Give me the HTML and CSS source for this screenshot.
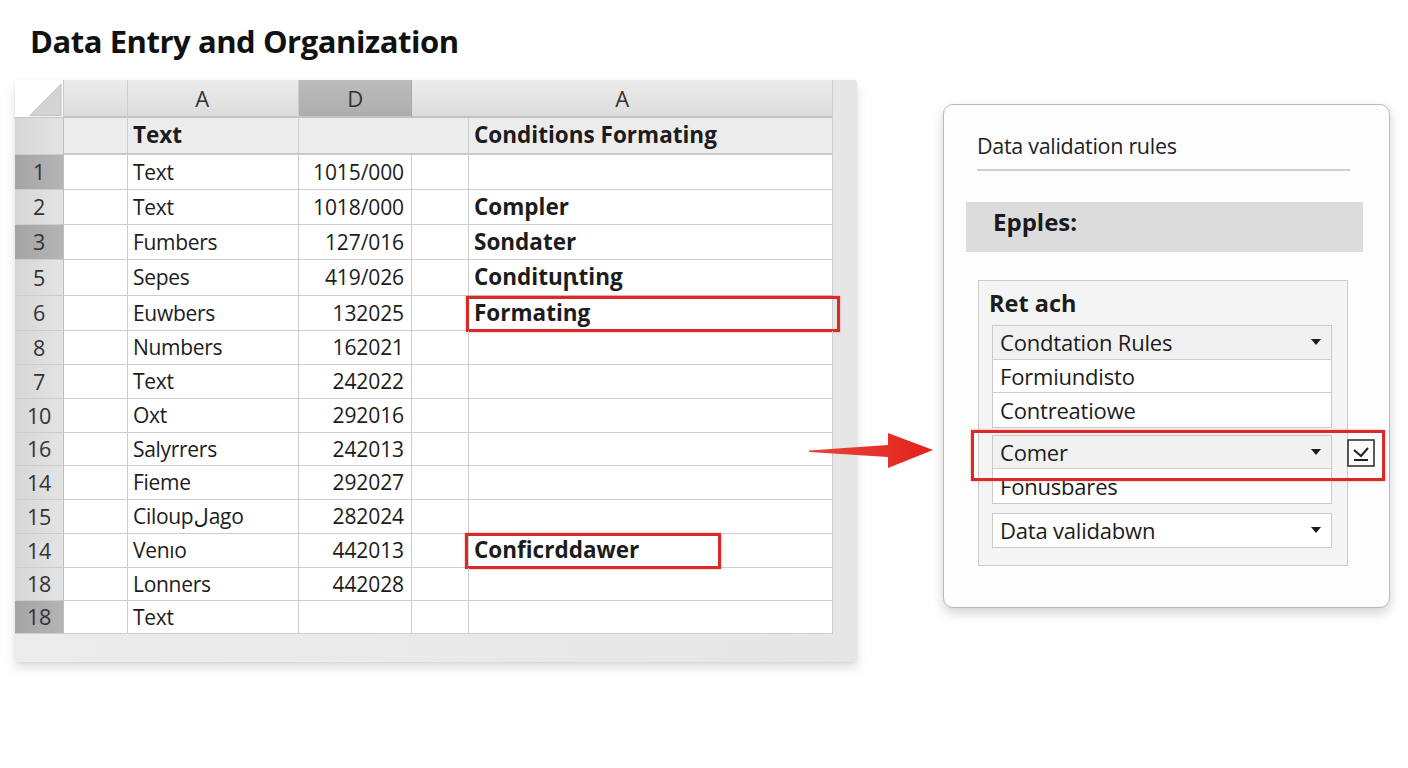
FILE: index.html
```html
<!DOCTYPE html>
<html lang="en">
<head>
<meta charset="utf-8">
<title>Data Entry and Organization</title>
<link rel="stylesheet" href="styles.css">
</head>
<body>
<main class="page">
  <h1 class="title">Data Entry and Organization</h1>
  <div class="stage">
    <section class="sheet">
      <div class="grid">
        <div class="c corner"><svg class="corner-tri" viewBox="0 0 49 38" width="49" height="38"><polygon points="15,36 47,4 47,36" fill="#d4d4d4" stroke="#bdbdbd" stroke-width="1"/></svg></div>
        <div class="c hdr"></div>
        <div class="c hdr center hdr-a">A</div>
        <div class="c hdr hdr-sel center">D</div>
        <div class="c hdr center span2">A</div>

        <div class="c rn"></div>
        <div class="c sub"></div>
        <div class="c sub b">Text</div>
        <div class="c sub span2"></div>
        <div class="c sub b">Conditions Formating</div>

        <div class="c rn dark">1</div><div class="c"></div><div class="c">Text</div><div class="c num">1015/000</div><div class="c"></div><div class="c b"></div>
        <div class="c rn">2</div><div class="c"></div><div class="c">Text</div><div class="c num">1018/000</div><div class="c"></div><div class="c b">Compler</div>
        <div class="c rn dark">3</div><div class="c"></div><div class="c">Fumbers</div><div class="c num">127/016</div><div class="c"></div><div class="c b">Sondater</div>
        <div class="c rn">5</div><div class="c"></div><div class="c">Sepes</div><div class="c num">419/026</div><div class="c"></div><div class="c b">Condituꞃting</div>
        <div class="c rn">6</div><div class="c"></div><div class="c">Euwbers</div><div class="c num">132025</div><div class="c"></div><div class="c b">Formating<span class="mark mark-wide"></span></div>
        <div class="c rn">8</div><div class="c"></div><div class="c">Numbers</div><div class="c num">162021</div><div class="c"></div><div class="c b"></div>
        <div class="c rn">7</div><div class="c"></div><div class="c">Text</div><div class="c num">242022</div><div class="c"></div><div class="c b"></div>
        <div class="c rn">10</div><div class="c"></div><div class="c">Oxt</div><div class="c num">292016</div><div class="c"></div><div class="c b"></div>
        <div class="c rn">16</div><div class="c"></div><div class="c">Salyrrers</div><div class="c num">242013</div><div class="c"></div><div class="c b"></div>
        <div class="c rn">14</div><div class="c"></div><div class="c">Fieme</div><div class="c num">292027</div><div class="c"></div><div class="c b"></div>
        <div class="c rn">15</div><div class="c"></div><div class="c">Ciloupلago</div><div class="c num">282024</div><div class="c"></div><div class="c b"></div>
        <div class="c rn">14</div><div class="c"></div><div class="c">Venıo</div><div class="c num">442013</div><div class="c"></div><div class="c b">Conficrddawer<span class="mark mark-short"></span></div>
        <div class="c rn">18</div><div class="c"></div><div class="c">Lonners</div><div class="c num">442028</div><div class="c"></div><div class="c b"></div>
        <div class="c rn dark">18</div><div class="c"></div><div class="c">Text</div><div class="c num"></div><div class="c"></div><div class="c b"></div>
      </div>
    </section>

    <aside class="panel">
      <h2 class="panel-title">Data validation rules</h2>
      <div class="band">Epples:</div>
      <div class="inner">
        <div class="inner-title">Ret ach</div>
        <div class="list">
          <div class="item shade">Condtation Rules<span class="caret"></span></div>
          <div class="item">Formiundisto</div>
          <div class="item">Contreatiowe</div>
        </div>
        <div class="list">
          <div class="item shade">Comer<span class="caret"></span></div>
          <div class="item">Fonusbares</div>
        </div>
        <div class="list list-last">
          <div class="item">Data validabwn<span class="caret"></span></div>
        </div>
      </div>
      <div class="sel-box"></div>
      <svg class="check" viewBox="0 0 28 28" width="28" height="28">
        <rect x="1" y="1" width="26" height="26" fill="#fafafa" stroke="#333" stroke-width="1.6"/>
        <path d="M7 11 L14 17 L21 9" fill="none" stroke="#222" stroke-width="2"/>
        <path d="M7 21 H21" stroke="#222" stroke-width="2"/>
      </svg>
    </aside>
  </div>
  <svg class="arrow" viewBox="805 428 132 44" width="132" height="44">
    <defs>
      <linearGradient id="ag" x1="0" y1="0" x2="1" y2="0">
        <stop offset="0" stop-color="#e8453c"/>
        <stop offset="1" stop-color="#e3221b"/>
      </linearGradient>
    </defs>
    <polygon points="809,450.5 888,445 888,433 933,450 888,468 888,457 809,452" fill="url(#ag)"/>
  </svg>
</main>
</body>
</html>
```

FILE: styles.css
```css
* { box-sizing: border-box; }
html, body { margin: 0; padding: 0; background: #ffffff; }
body {
  font-family: "Open Sans", "Noto Sans", "DejaVu Sans", sans-serif;
  color: #1c1c1c;
  width: 1408px;
  height: 768px;
  overflow: hidden;
}
.page { position: relative; padding-left: 15px; }
.title {
  margin: 0;
  height: 80px;
  padding: 19px 0 0 15px;
  font-size: 31px;
  line-height: 44px;
  font-weight: 700;
  letter-spacing: -0.45px;
  color: #111;
}
.stage { display: flex; align-items: flex-start; gap: 86px; }

/* spreadsheet */
.sheet {
  background: linear-gradient(90deg, #ececec, #e6e6e6);
  padding: 0 24px 28px 0;
  box-shadow: 0 6px 12px rgba(0,0,0,0.12), 0 1px 3px rgba(0,0,0,0.08);
  border-radius: 0 3px 4px 4px;
}
.grid {
  display: grid;
  grid-template-columns: 49px 64px 171px 113px 57px 364px;
  grid-template-rows: 38px 37px 35px 35px 35px 36px 35px 34px 34px 34px 33px 34px 34px 34px 33px 33px;
  background: #fff;
}
.c {
  position: relative;
  border-right: 1px solid #cdcdcd;
  border-bottom: 1px solid #cdcdcd;
  font-size: 21px;
  line-height: 1;
  display: flex;
  align-items: center;
  padding-left: 5px;
  white-space: nowrap;
  letter-spacing: -0.3px;
}
.center { justify-content: center; padding-left: 0; }
.hdr-a { padding-right: 22px; }
.span2 { grid-column: span 2; }
.b { font-weight: 700; font-size: 22.5px; letter-spacing: 0; }
.num { justify-content: flex-end; padding-right: 7px; padding-left: 0; letter-spacing: -0.1px; }
.corner { background: #fff; padding: 0; border-right: 1px solid #c6c6c6; border-bottom: 1px solid #c6c6c6; }
.corner-tri { display: block; }
.hdr {
  background: linear-gradient(180deg, #ececec, #dcdcdc);
  color: #333;
  font-size: 22px;
  border-bottom: 2px solid #c4c4c4;
}
.hdr-sel { background: linear-gradient(180deg, #bcbcbc, #adadad); border-right: 1px solid #a8a8a8; }
.sub { background: #ececec; border-bottom: 2px solid #cacaca; }
.rn {
  background: linear-gradient(90deg, #d6d6d6, #e4e4e4);
  justify-content: center;
  padding-left: 0;
  color: #333;
  font-size: 21.5px;
  border-right: 1px solid #bdbdbd;
}
.rn.dark { background: linear-gradient(90deg, #a5a5a5, #b4b4b4); }
.mark {
  position: absolute;
  border: 3px solid #d92a27;
  box-shadow: 0 0 2px rgba(217,42,39,0.5);
  pointer-events: none;
}
.mark-wide { left: -3px; top: 0; width: 374px; height: 36px; }
.mark-short { left: -4px; top: -1px; width: 256px; height: 36px; }

/* panel */
.panel {
  position: relative;
  margin-top: 24px;
  width: 447px;
  height: 504px;
  background: #fdfdfd;
  border: 1.5px solid #b9b9b9;
  border-radius: 10px;
  box-shadow: 0 5px 12px rgba(0,0,0,0.18);
  padding: 0 26px 0 22px;
}
.panel-title {
  margin: 0 0 0 11px;
  width: 373px;
  padding-top: 26px;
  height: 66px;
  font-size: 21.5px;
  line-height: 30px;
  font-weight: 400;
  color: #1f1f1f;
  border-bottom: 2px solid #cfcfcf;
  letter-spacing: -0.3px;
}
.band {
  margin-top: 31px;
  height: 50px;
  width: 397px;
  background: #dcdcdc;
  padding-left: 27px;
  font-size: 24px;
  font-weight: 700;
  line-height: 40px;
  color: #1a1a1a;
  letter-spacing: 0;
}
.inner {
  margin: 28px 0 0 12px;
  width: 370px;
  height: 286px;
  border: 1px solid #cbcbcb;
  background: #f4f4f4;
  padding: 7px 15px 0 13px;
  display: flex;
  flex-direction: column;
}
.inner-title {
  font-size: 23.5px;
  font-weight: 700;
  line-height: 30px;
  height: 37px;
  margin-left: -3px;
  letter-spacing: 0;
}
.list { border: 1px solid #c9c9c9; background: #fff; margin-bottom: 7px; }
.list-last { margin-top: 2px; }
.item {
  position: relative;
  height: 33.5px;
  display: flex;
  align-items: center;
  padding-left: 7px;
  font-size: 22px;
  color: #1c1c1c;
  letter-spacing: -0.2px;
  border-bottom: 1px solid #cfcfcf;
}
.item:last-child { border-bottom: none; }
.item.shade { background: #f1f1f1; }
.caret {
  position: absolute;
  right: 10px;
  top: 50%;
  margin-top: -3px;
  width: 0; height: 0;
  border-left: 5px solid transparent;
  border-right: 5px solid transparent;
  border-top: 6px solid #1c1c1c;
}
.sel-box {
  position: absolute;
  left: 27px;
  top: 325px;
  width: 414px;
  height: 51px;
  border: 3px solid #d92a27;
  box-shadow: 0 0 2px rgba(217,42,39,0.5);
}
.check { position: absolute; left: 403px; top: 334px; }

.arrow { position: absolute; left: 805px; top: 428px; }
```
